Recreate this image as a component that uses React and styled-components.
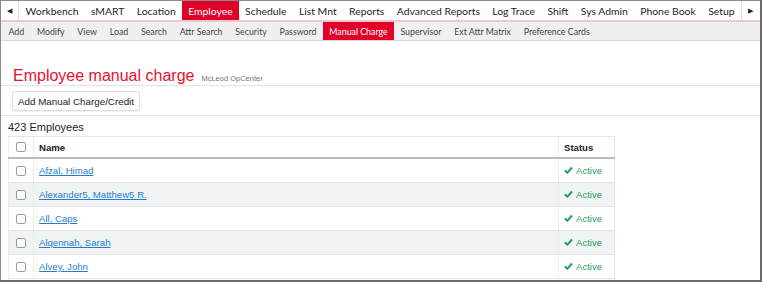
import React from "react";
import styled, { createGlobalStyle } from "styled-components";

const GlobalStyle = createGlobalStyle`
  html, body {
    margin: 0;
    padding: 0;
    background: #ffffff;
  }
`;

const Frame = styled.div`
  box-sizing: border-box;
  width: 762px;
  height: 282px;
  border: 1px solid #8a8a8a;
  border-right: 2px solid #6a6a6a;
  border-bottom: 2px solid #6a6a6a;
  overflow: hidden;
  background: #fff;
  font-family: "Liberation Sans", Arial, sans-serif;
  color: #222;
`;

const MenuBar = styled.div`
  display: flex;
  align-items: stretch;
  height: 19px;
  border-bottom: 2px solid #f1c6cc;
  font-family: "Lato", "Open Sans", sans-serif;
  font-size: 10.4px;
`;

const Arrow = styled.div`
  display: flex;
  align-items: center;
  justify-content: center;
  width: ${(p) => (p.$right ? "20px" : "19px")};
  font-size: 7px;
  color: #222;
  border-${(p) => (p.$right ? "left" : "right")}: 1px solid #ddd;
  margin-${(p) => (p.$right ? "left" : "right")}: auto;
`;

const MenuItems = styled.div`
  display: flex;
  flex: 1;
  padding-left: 0;
`;

const MenuItem = styled.div`
  display: flex;
  align-items: center;
  padding: 0 6.2px;
  color: ${(p) => (p.$active ? "#fff" : "#1e1e1e")};
  background: ${(p) => (p.$active ? "#e1002a" : "transparent")};
  white-space: nowrap;
`;

const SubBar = styled.div`
  display: flex;
  align-items: stretch;
  height: 18px;
  padding-left: 1px;
  background: #f0f0f0;
  border-bottom: 1px solid #d9d9d9;
  font-family: "Lato", "Open Sans", sans-serif;
  font-size: 8.8px;
`;

const SubItem = styled.div`
  display: flex;
  align-items: center;
  padding: 0 6.4px;
  color: ${(p) => (p.$active ? "#fff" : "#444")};
  background: ${(p) => (p.$active ? "#e1002a" : "transparent")};
  white-space: nowrap;
`;

const TitleRow = styled.div`
  display: flex;
  align-items: baseline;
  gap: 7px;
  height: 19px;
  padding: 25px 12px 0;
  border-bottom: 1px solid #e2e2e2;
`;

const Title = styled.h1`
  margin: 0;
  font-size: 16px;
  line-height: 19px;
  font-weight: normal;
  color: #e8112d;
`;

const Subtitle = styled.span`
  font-size: 7.5px;
  color: #777;
`;

const Toolbar = styled.div`
  display: flex;
  padding: 5px 11px 4px;
  border-bottom: 1px solid #e2e2e2;
`;

const Button = styled.button`
  height: 20px;
  font-family: "Liberation Sans", Arial, sans-serif;
  font-size: 9.8px;
  color: #222;
  background: #fff;
  border: 1px solid #ddd;
  border-radius: 3px;
  padding: 0 5px;
  box-shadow: 0 1px 1px rgba(0, 0, 0, 0.06);
`;

const Count = styled.div`
  font-size: 11px;
  line-height: 14px;
  padding: 4px 7px 2px;
`;

const Table = styled.table`
  margin-left: 7px;
  width: 607px;
  border-collapse: collapse;
  font-size: 9.6px;
  border-left: 1px solid #e6e6e6;
  border-right: 1px solid #e6e6e6;
`;

const HeadCell = styled.th`
  text-align: left;
  font-weight: bold;
  height: 20px;
  padding: 0 5px;
  border-bottom: 2px solid #bbb;
  border-top: 1px solid #e6e6e6;
  border-left: 1px solid #eee;
  width: ${(p) => p.$w || "auto"};
`;

const Row = styled.tr`
  background: ${(p) => (p.$striped ? "#f0f3f4" : "#fff")};
`;

const Cell = styled.td`
  height: 23px;
  padding: 0 5px;
  border-bottom: 1px solid #e3e3e3;
  border-left: 1px solid #eee;
`;

const Check = styled.span`
  display: block;
  width: 8px;
  height: 8px;
  margin: 0 auto;
  border: 1px solid #9a9a9a;
  border-radius: 2px;
  background: #fff;
`;

const NameLink = styled.a`
  color: #1f7fce;
  text-decoration: underline;
`;

const Status = styled.span`
  display: inline-flex;
  align-items: center;
  gap: 3px;
  color: #2aa05a;
`;

const menu = [
  "Workbench",
  "sMART",
  "Location",
  "Employee",
  "Schedule",
  "List Mnt",
  "Reports",
  "Advanced Reports",
  "Log Trace",
  "Shift",
  "Sys Admin",
  "Phone Book",
  "Setup",
];

const sub = [
  "Add",
  "Modify",
  "View",
  "Load",
  "Search",
  "Attr Search",
  "Security",
  "Password",
  "Manual Charge",
  "Supervisor",
  "Ext Attr Matrix",
  "Preference Cards",
];

const employees = [
  "Afzal, Himad",
  "Alexander5, Matthew5 R.",
  "All, Caps",
  "Alqennah, Sarah",
  "Alvey, John",
];

const CheckIcon = () => (
  <svg width="9" height="8" viewBox="0 0 10 8">
    <path d="M1 4.2 L3.8 7 L9 1.3" fill="none" stroke="#2aa05a" strokeWidth="2.3" />
  </svg>
);

const App = () => (
  <Frame>
    <GlobalStyle />
    <MenuBar>
      <Arrow>◀</Arrow>
      <MenuItems>
        {menu.map((m) => (
          <MenuItem key={m} $active={m === "Employee"}>
            {m}
          </MenuItem>
        ))}
      </MenuItems>
      <Arrow $right>▶</Arrow>
    </MenuBar>
    <SubBar>
      {sub.map((s) => (
        <SubItem key={s} $active={s === "Manual Charge"}>
          {s}
        </SubItem>
      ))}
    </SubBar>
    <TitleRow>
      <Title>Employee manual charge</Title>
      <Subtitle>McLeod OpCenter</Subtitle>
    </TitleRow>
    <Toolbar>
      <Button>Add Manual Charge/Credit</Button>
    </Toolbar>
    <Count>423 Employees</Count>
    <Table>
      <thead>
        <tr>
          <HeadCell $w="14px">
            <Check />
          </HeadCell>
          <HeadCell>Name</HeadCell>
          <HeadCell $w="45px">Status</HeadCell>
        </tr>
      </thead>
      <tbody>
        {employees.map((e, i) => (
          <Row key={e} $striped={i % 2 === 1}>
            <Cell>
              <Check />
            </Cell>
            <Cell>
              <NameLink href="#">{e}</NameLink>
            </Cell>
            <Cell>
              <Status>
                <CheckIcon />
                Active
              </Status>
            </Cell>
          </Row>
        ))}
      </tbody>
    </Table>
  </Frame>
);

export default App;
